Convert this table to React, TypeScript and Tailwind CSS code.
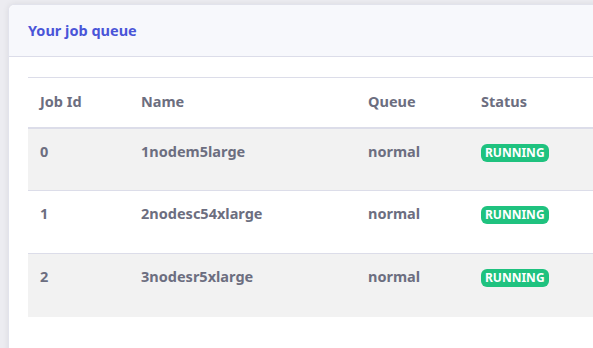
import React from 'react';

type Job = { id: number; name: string; queue: string; status: string };

const jobs: Job[] = [
    { id: 0, name: '1nodem5large', queue: 'normal', status: 'RUNNING' },
    { id: 1, name: '2nodesc54xlarge', queue: 'normal', status: 'RUNNING' },
    { id: 2, name: '3nodesr5xlarge', queue: 'normal', status: 'RUNNING' },
];

export default function App() {
    return (
        <div className="w-[593px] h-[348px] overflow-hidden bg-[#ececf1] pl-2 pt-1" style={{ fontFamily: '"Noto Sans", Lato, sans-serif' }}>
            <div className="w-[640px] h-[400px] bg-white rounded-md shadow-[0_0_6px_rgba(0,0,0,0.08)] border border-[#e2e3ec]">
                <div className="h-[52px] bg-[#f7f8fc] border-b border-[#dcdde9] rounded-t-md flex items-center pl-[19px]">
                    <h2 className="text-[14.5px] font-bold text-[#4a55d8]">Your job queue</h2>
                </div>
                <div className="pt-5 pl-[19px]">
                    <table className="w-[620px] table-fixed border-collapse text-[14.5px] font-bold text-[#6c6e80]">
                        <colgroup>
                            <col className="w-[113px]" />
                            <col className="w-[227px]" />
                            <col className="w-[113px]" />
                            <col />
                        </colgroup>
                        <thead>
                            <tr className="h-[50px] border-t border-[#dcdde9] border-b-2">
                                <th className="text-left font-bold pl-3">Job Id</th>
                                <th className="text-left font-bold">Name</th>
                                <th className="text-left font-bold">Queue</th>
                                <th className="text-left font-bold">Status</th>
                            </tr>
                        </thead>
                        <tbody>
                            {jobs.map((job, i) => (
                                <tr key={job.id} className={`h-[63px] border-b border-[#dcdde9] last:border-b-0 ${i % 2 === 0 ? 'bg-[#f2f2f2]' : 'bg-white'}`}>
                                    <td className="align-top pt-[12px] pl-3">{job.id}</td>
                                    <td className="align-top pt-[12px]">{job.name}</td>
                                    <td className="align-top pt-[12px]">{job.queue}</td>
                                    <td className="align-top pt-[15px]">
                                        <span className="flex w-fit items-center h-[18px] px-[4px] rounded-[6px] bg-[#1fc27f] text-white text-[12px] font-bold leading-none">
                                            {job.status}
                                        </span>
                                    </td>
                                </tr>
                            ))}
                        </tbody>
                    </table>
                </div>
            </div>
        </div>
    );
}
